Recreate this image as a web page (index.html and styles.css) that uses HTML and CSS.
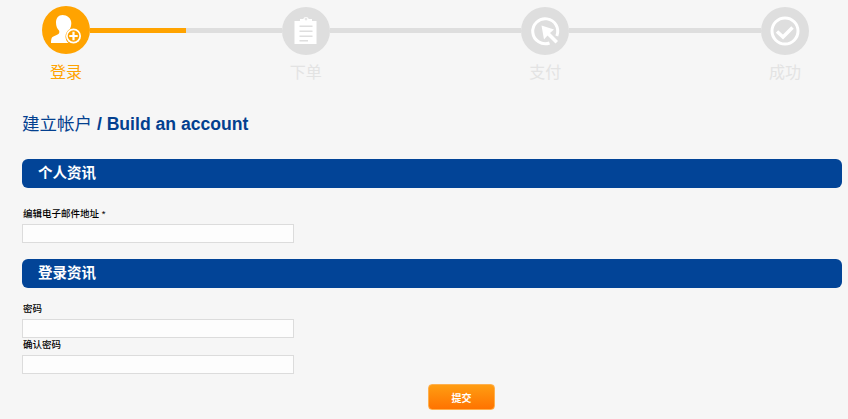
FILE: index.html
```html
<!DOCTYPE html>
<html lang="zh-CN">
<head>
    <meta charset="UTF-8">
    <meta name="viewport" content="width=device-width, initial-scale=1.0">
    <title>Build an account</title>
    <link rel="stylesheet" href="styles.css">
</head>
<body>
    <div class="steps">
        <div class="step active">
            <div class="step-icon">
                <svg width="48" height="48" viewBox="0 0 48 48">
                    <path fill="#fff" d="M20.500 9c-4 0-6.500 3-6.500 7.500 0 3.500 1.200 6.500 3 8 .5.800.5 2.500-.3 3.300-1.500 1.200-6 2.500-7 4.200-.5 1-.7 3-.7 5h17.500c-1.800-1.500-3-4-3-6.500 0-3.300 1.800-6.100 4.500-7.600 .8-1.700 1.300-3.700 1.300-5.900C29.300 12 25 9 20.500 9z"/>
                    <circle cx="31.500" cy="30" r="7.500" fill="#fff"/>
                    <circle cx="31.500" cy="30" r="5.800" fill="#ffa300"/>
                    <path fill="#fff" d="M30.400 25.800h2.200v3.100h3.100v2.200h-3.100v3.100h-2.200v-3.100h-3.100v-2.200h3.100z"/>
                </svg>
            </div>
            <div class="step-name">登录</div>
        </div>
        <div class="step-line"><div class="step-line-done"></div></div>
        <div class="step">
            <div class="step-icon">
                <svg width="48" height="48" viewBox="0 0 48 48">
                    <path fill="#fff" d="M12.500 14h5.500v-2h3.300c.3-1.200 1.400-2 2.700-2s2.400.8 2.700 2H30v2h4.500v23h-22z"/>
                    <path fill="#dedede" d="M23.500 10.800h1v.8h.8v1h-.8v.8h-1v-.8h-.8v-1h.8z"/>
                    <path fill="#dedede" d="M17.500 18.500h13v1.500h-13zM17.500 23.500h13v1.500h-13zM17.500 28.500h13v1.500h-13zM17.500 33h8.500v1.500h-8.500z"/>
                </svg>
            </div>
            <div class="step-name">下单</div>
        </div>
        <div class="step-line"></div>
        <div class="step">
            <div class="step-icon">
                <svg width="48" height="48" viewBox="0 0 48 48">
                    <path fill="none" stroke="#fff" stroke-width="3" d="M35.800 29A12.500 12.500 0 1 0 28.500 36"/>
                    <path fill="#fff" d="M20.500 18.500l12.500 4-4 3.500 8 8-2.500 2.500-8-8-3.500 4z"/>
                </svg>
            </div>
            <div class="step-name">支付</div>
        </div>
        <div class="step-line"></div>
        <div class="step">
            <div class="step-icon">
                <svg width="48" height="48" viewBox="0 0 48 48">
                    <circle cx="24" cy="24" r="13" fill="none" stroke="#fff" stroke-width="3"/>
                    <path fill="none" stroke="#fff" stroke-width="3.500" d="M16 24.500l6 5.500 9.500-9.500"/>
                </svg>
            </div>
            <div class="step-name">成功</div>
        </div>
    </div>

    <h1 class="page-title"><span class="title-cn">建立帐户</span> / Build an account</h1>

    <form class="account-form">
        <h2 class="section-bar">个人资讯</h2>
        <div class="email-field">
            <label for="email">编辑电子邮件地址 *</label>
            <input type="text" id="email">
        </div>

        <h2 class="section-bar">登录资讯</h2>
        <div class="password-field">
            <label for="password">密码</label>
            <input type="password" id="password">
        </div>
        <div class="confirm-field">
            <label for="confirm">确认密码</label>
            <input type="password" id="confirm">
        </div>

        <div class="buttons">
            <button type="button" class="submit-btn">提交</button>
        </div>
    </form>
</body>
</html>
```

FILE: styles.css
```css
body {
    margin: 0;
    padding: 6px 6px 0 22px;
    background-color: #f6f6f6;
    font-family: "Liberation Sans", "Noto Sans CJK SC", sans-serif;
}

.steps {
    display: flex;
    padding-left: 20px;
}

.step {
    width: 48px;
    flex: none;
    text-align: center;
}

.step-icon {
    width: 48px;
    height: 48px;
    margin-top: 1px;
    border-radius: 50%;
    background-color: #dedede;
}

.step-icon svg {
    display: block;
}

.step-name {
    margin-top: 9px;
    font-size: 16px;
    line-height: 18px;
    color: #e3e3e3;
}

.step.active .step-icon {
    margin-top: 0;
    background-color: #ffa300;
}

.step.active .step-name {
    margin-top: 10px;
    color: #ffa300;
}

.step-line {
    width: 191.67px;
    height: 5px;
    flex: none;
    margin-top: 22px;
    background-color: #dedede;
}

.step-line-done {
    width: 96px;
    height: 5px;
    background-color: #ffa300;
}

.page-title {
    margin: 31px 0 0;
    font-size: 17.6px;
    line-height: 22px;
    font-weight: bold;
    color: #03408f;
}

.title-cn {
    font-size: 17.5px;
    font-weight: normal;
}

.section-bar {
    margin: 0;
    height: 29px;
    padding-left: 16px;
    border-radius: 6px;
    background-color: #024497;
    font-size: 14.5px;
    line-height: 29px;
    font-weight: bold;
    color: #fff;
}

.account-form {
    margin-top: 24px;
}

label {
    display: block;
    height: 12px;
    padding-left: 1px;
    font-size: 9.5px;
    line-height: 12px;
    font-weight: 500;
    color: #000;
}

input {
    display: block;
    box-sizing: border-box;
    width: 272px;
    height: 19px;
    margin: 0;
    padding: 0 4px;
    border: 1px solid #dcdcdc;
    background-color: #fdfdfd;
}

.email-field {
    margin: 20px 0 16px;
}

.email-field input {
    margin-top: 4px;
}

.password-field {
    margin-top: 15px;
}

.password-field input {
    margin-top: 4px;
}

.confirm-field {
    margin-top: 1px;
}

.confirm-field input {
    margin-top: 4px;
}

.buttons {
    margin-top: 10px;
    padding-left: 406px;
}

.submit-btn {
    display: block;
    width: 67px;
    height: 26px;
    padding: 0;
    border: 1px solid #ffb04d;
    border-radius: 4px;
    background: linear-gradient(#ff9d12, #ff7300);
    font-family: inherit;
    font-size: 10px;
    font-weight: bold;
    color: #fff;
    cursor: pointer;
}
```
